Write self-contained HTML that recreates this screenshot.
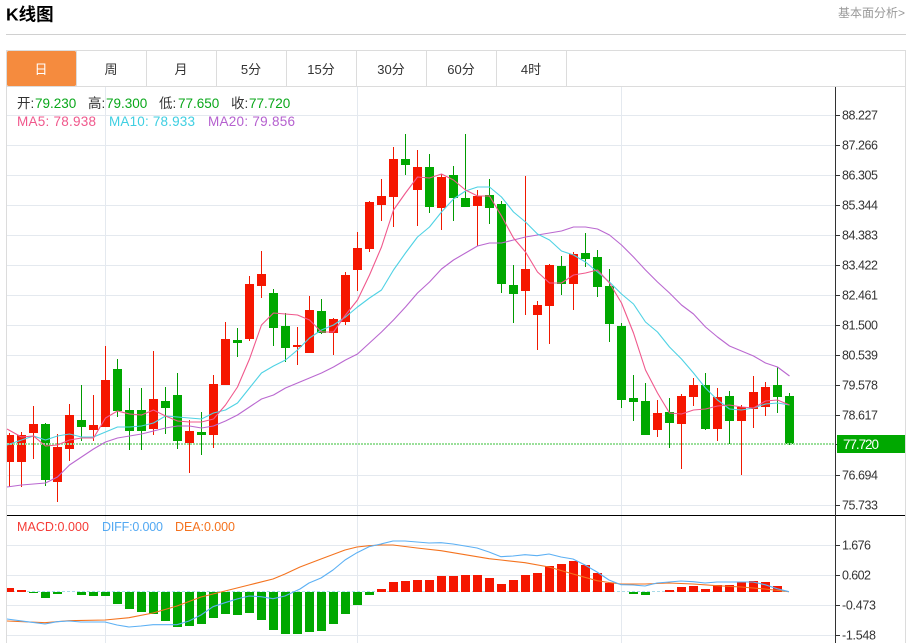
<!DOCTYPE html>
<html><head><meta charset="utf-8"><title>K线图</title>
<style>
html,body{margin:0;padding:0;background:#fff;width:914px;height:643px;overflow:hidden}
svg{display:block;font-family:"Liberation Sans","Noto Sans CJK SC",sans-serif}
</style></head><body>
<svg width="914" height="643" viewBox="0 0 914 643" xmlns="http://www.w3.org/2000/svg">
<text x="6" y="20.5" font-size="17.5" font-weight="700" fill="#000">K线图</text>
<text x="838" y="17" font-size="12" fill="#999" textLength="67">基本面分析&gt;</text>
<path d="M6 34.5H906" stroke="#d0d0d0" fill="none"/>
<path d="M6.5 643V50.5H905.5V643M7 86.5H905M146.5 51V86M216.5 51V86M286.5 51V86M356.5 51V86M426.5 51V86M496.5 51V86M566.5 51V86M76.5 51V86" stroke="#dcdcdc" fill="none"/>
<rect x="7" y="51" width="69" height="35" rx="1.5" fill="#f58b3e"/>
<g font-size="13" text-anchor="middle" fill="#333">
<text x="41" y="74" fill="#fff">日</text><text x="111" y="74">周</text><text x="181" y="74">月</text><text x="251" y="74">5分</text><text x="321" y="74">15分</text><text x="391" y="74">30分</text><text x="461" y="74">60分</text><text x="531" y="74">4时</text>
</g>
<path d="M7 115.5H835M7 145.5H835M7 175.5H835M7 205.5H835M7 235.5H835M7 265.5H835M7 295.5H835M7 325.5H835M7 355.5H835M7 385.5H835M7 415.5H835M7 475.5H835M7 505.5H835M7 545.5H835M7 575.5H835M7 605.5H835M7 635.5H835M105.5 87V643M357.5 87V643M621.5 87V643" stroke="#e4e9ef" fill="none"/>

<path d="M9.5 433V487M21.5 432V487M33.5 406V459M57.5 434V502M69.5 404V461M93.5 395V441M105.5 346V427M153.5 351V435M189.5 420V473M213.5 375V448M225.5 322V385M249.5 276V341M261.5 251V298M297.5 327V365M309.5 296V353M333.5 318V355M345.5 272V325M357.5 232V291M369.5 201V252M381.5 179V221M393.5 147V227M417.5 150V226M441.5 174V230M477.5 190V246M525.5 176V315M537.5 301V350M549.5 264V344M573.5 252V310M657.5 400V437M681.5 394V469M693.5 378V406M717.5 388V441M741.5 405V475M753.5 376V428M765.5 382V416" stroke="#f01800" fill="none"/>
<path d="M7 435h7v27h-7zM17 435h9v27h-9zM29 424h9v9h-9zM53 447h9v35h-9zM65 415h9v34h-9zM89 425h9v5h-9zM101 380h9v47h-9zM149 399h9v30h-9zM185 431h9v12h-9zM209 384h9v51h-9zM221 339h9v46h-9zM245 284h9v55h-9zM257 274h9v12h-9zM293 345h9v2h-9zM305 310h9v43h-9zM329 319h9v14h-9zM341 275h9v47h-9zM353 248h9v22h-9zM365 202h9v47h-9zM377 196h9v9h-9zM389 159h9v38h-9zM413 167h9v23h-9zM437 177h9v31h-9zM473 196h9v10h-9zM521 269h9v22h-9zM533 305h9v10h-9zM545 265h9v41h-9zM569 254h9v30h-9zM653 413h9v17h-9zM677 396h9v28h-9zM689 385h9v12h-9zM713 397h9v32h-9zM737 407h9v14h-9zM749 392h9v17h-9zM761 387h9v20h-9z" fill="#f51600"/>
<path d="M45.5 423V486M81.5 385V441M117.5 359V417M129.5 388V450M141.5 388V450M165.5 387V434M177.5 373V449M201.5 412V455M237.5 328V357M273.5 289V346M285.5 313V362M321.5 299V334M405.5 134V175M429.5 154V213M453.5 166V221M465.5 134V207M489.5 179V224M501.5 201V293M513.5 265V323M561.5 256V295M585.5 233V267M597.5 250V297M609.5 269V342M621.5 323V408M633.5 375V421M645.5 383V435M669.5 398V448M705.5 373V430M729.5 391V444M777.5 367V413M789.5 393V445" stroke="#009a00" fill="none"/>
<path d="M41 424h9v56h-9zM77 420h9v7h-9zM113 369h9v42h-9zM125 410h9v21h-9zM137 410h9v21h-9zM161 401h9v7h-9zM173 395h9v46h-9zM197 432h9v3h-9zM233 340h9v3h-9zM269 293h9v35h-9zM281 326h9v22h-9zM317 311h9v22h-9zM401 159h9v6h-9zM425 167h9v40h-9zM449 175h9v23h-9zM461 198h9v9h-9zM485 195h9v13h-9zM497 204h9v80h-9zM509 285h9v9h-9zM557 266h9v18h-9zM581 253h9v6h-9zM593 257h9v30h-9zM605 286h9v38h-9zM617 326h9v74h-9zM629 398h9v4h-9zM641 401h9v34h-9zM665 412h9v11h-9zM701 385h9v44h-9zM725 396h9v25h-9zM773 385h9v12h-9zM785 396h9v48h-9z" fill="#00a800"/>

<path d="M7 444H835" stroke="#9adf9a" stroke-width="2" stroke-dasharray="2 1" fill="none"/>

<g stroke-linejoin="round">
<polyline fill="none" stroke="#ba68d0" stroke-width="1.1" points="7,487 21.5,485 33.5,484 45.5,483 57.5,477 69.5,465 81.5,457 93.5,449 105.5,442 117.5,438 129.5,436 141.5,434 153.5,431 165.5,428 177.5,426 189.5,426 201.5,428 213.5,426 225.5,421 237.5,415 249.5,407 261.5,399 273.5,395 285.5,388 297.5,383 309.5,378 321.5,373 333.5,367 345.5,360 357.5,354 369.5,343 381.5,332 393.5,320 405.5,307 417.5,293 429.5,282 441.5,269 453.5,260 465.5,253 477.5,246 489.5,243 501.5,243 513.5,240 525.5,237 537.5,235 549.5,233 561.5,231 573.5,227 585.5,227 597.5,229 609.5,235 621.5,245 633.5,257 645.5,270 657.5,282 669.5,293 681.5,305 693.5,314 705.5,327 717.5,337 729.5,346 741.5,351 753.5,356 765.5,363 777.5,367 789.5,376"/>
<polyline fill="none" stroke="#4fd2e4" stroke-width="1.1" points="7,445 21.5,440 33.5,436 45.5,440 57.5,436 69.5,434 81.5,437 93.5,437 105.5,432 117.5,427 129.5,427 141.5,426 153.5,423 165.5,416 177.5,417 189.5,418 201.5,419 213.5,413 225.5,410 237.5,403 249.5,388 261.5,373 273.5,366 285.5,360 297.5,350 309.5,338 321.5,330 333.5,325 345.5,317 357.5,307 369.5,298 381.5,290 393.5,270 405.5,253 417.5,237 429.5,227 441.5,212 453.5,199 465.5,191 477.5,187 489.5,187 501.5,197 513.5,212 525.5,222 537.5,234 549.5,240 561.5,251 573.5,255 585.5,262 597.5,272 609.5,282 621.5,294 633.5,304 645.5,322 657.5,332 669.5,347 681.5,359 693.5,373 705.5,388 717.5,400 729.5,409 741.5,410 753.5,408 765.5,404 777.5,403 789.5,405"/>
<polyline fill="none" stroke="#f0588c" stroke-width="1.1" points="7,429 21.5,437 33.5,436 45.5,446 57.5,445 69.5,440 81.5,438 93.5,438 105.5,418 117.5,411 129.5,414 141.5,415 153.5,410 165.5,416 177.5,421 189.5,422 201.5,422 213.5,419 225.5,405 237.5,387 249.5,359 261.5,325 273.5,313 285.5,314 297.5,315 309.5,320 321.5,332 333.5,332 345.5,315 357.5,300 369.5,275 381.5,247 393.5,210 405.5,193 417.5,177 429.5,178 441.5,174 453.5,180 465.5,190 477.5,196 489.5,196 501.5,216 513.5,238 525.5,252 537.5,272 549.5,283 561.5,283 573.5,275 585.5,273 597.5,270 609.5,283 621.5,303 633.5,333 645.5,370 657.5,393 669.5,413 681.5,414 693.5,410 705.5,409 717.5,406 729.5,405 741.5,407 753.5,408 765.5,401 777.5,400 789.5,405"/>
</g>

<path d="M7 591.5H789" stroke="#a9dbe8" stroke-dasharray="3 2" fill="none"/>
<path d="M7 588h7v4h-7zM17 590h9v2h-9zM377 589h9v3h-9zM389 582h9v10h-9zM401 581h9v11h-9zM413 580h9v12h-9zM425 580h9v12h-9zM437 576h9v16h-9zM449 576h9v16h-9zM461 575h9v17h-9zM473 575h9v17h-9zM485 578h9v14h-9zM497 584h9v8h-9zM509 580h9v12h-9zM521 575h9v17h-9zM533 573h9v19h-9zM545 566h9v26h-9zM557 564h9v28h-9zM569 561h9v31h-9zM581 565h9v27h-9zM593 573h9v19h-9zM605 583h9v9h-9zM665 590h9v2h-9zM677 587h9v5h-9zM689 586h9v6h-9zM701 589h9v3h-9zM713 585h9v7h-9zM725 585h9v7h-9zM737 582h9v10h-9zM749 581h9v11h-9zM761 582h9v10h-9zM773 586h9v6h-9z" fill="#f51600"/>
<path d="M29 592h9v1h-9zM41 592h9v6h-9zM53 592h9v2h-9zM77 592h9v3h-9zM89 592h9v4h-9zM101 592h9v4h-9zM113 592h9v12h-9zM125 592h9v17h-9zM137 592h9v20h-9zM149 592h9v22h-9zM161 592h9v29h-9zM173 592h9v35h-9zM185 592h9v34h-9zM197 592h9v32h-9zM209 592h9v26h-9zM221 592h9v22h-9zM233 592h9v23h-9zM245 592h9v21h-9zM257 592h9v28h-9zM269 592h9v38h-9zM281 592h9v42h-9zM293 592h9v42h-9zM305 592h9v40h-9zM317 592h9v39h-9zM329 592h9v32h-9zM341 592h9v22h-9zM353 592h9v13h-9zM365 592h9v3h-9zM629 592h9v2h-9zM641 592h9v3h-9z" fill="#00a800"/>
<polyline fill="none" stroke="#f4731f" stroke-width="1.1" stroke-linejoin="round" points="7,621 45,622.7 69,620.7 105,620 129,617.7 153,613 177,606 201,597 225,591 249,585 273,579 285,574 300,567 321,559 345,550 357,547 369,545.7 381,545 393,545 417,548 441,550.7 465,554.7 489,558.7 501,560 525,562.7 549,567 573,574 597,580.7 609,582.5 621,584 645,584 669,583 693,584 717,585.7 741,587 765,589 789,591.7"/>
<polyline fill="none" stroke="#5cb0f4" stroke-width="1.1" stroke-linejoin="round" points="7,619 27,621.7 45,624 57,621.7 69,621 81,622 105,622 117,625 129,627 141,626 153,624.7 177,624.7 189,621 201,615 213,606.7 225,602.7 237,599 249,596 261,596.7 273,598.7 285,596 300,589 309,583 321,578 333,570 345,560 357,552.7 369,546.7 381,544 393,541 405,541 417,542 429,543 441,542.7 453,544 465,546 477,548 489,552 501,556.7 513,556 525,554.7 537,555.7 549,554 561,557 573,559 585,565 597,572 609,580 621,584.7 633,585 645,586 657,583 669,582 681,581 693,581.7 705,583 717,582 729,582 741,582 753,582 765,584.7 777,588.7 789,591.7"/>

<path d="M7 515.5H905" stroke="#000" fill="none"/>
<path d="M835.5 87V643M835 115.5h5M835 145.5h5M835 175.5h5M835 205.5h5M835 235.5h5M835 265.5h5M835 295.5h5M835 325.5h5M835 355.5h5M835 385.5h5M835 415.5h5M835 444.5h5M835 475.5h5M835 505.5h5M835 545.5h5M835 575.5h5M835 605.5h5M835 635.5h5" stroke="#333" fill="none"/>
<rect x="837" y="435" width="68" height="18" fill="#00a800"/>
<text x="843" y="449" font-size="13.5" fill="#fff" textLength="36">77.720</text>
<g font-size="12.5" fill="#333">
<text x="842" y="119.5" textLength="36">88.227</text><text x="842" y="149.5" textLength="36">87.266</text><text x="842" y="179.5" textLength="36">86.305</text><text x="842" y="209.5" textLength="36">85.344</text><text x="842" y="239.5" textLength="36">84.383</text><text x="842" y="269.5" textLength="36">83.422</text><text x="842" y="299.5" textLength="36">82.461</text><text x="842" y="329.5" textLength="36">81.500</text><text x="842" y="359.5" textLength="36">80.539</text><text x="842" y="389.5" textLength="36">79.578</text><text x="842" y="419.5" textLength="36">78.617</text><text x="842" y="479.5" textLength="36">76.694</text><text x="842" y="509.5" textLength="36">75.733</text>
<text x="842" y="549.5" textLength="29">1.676</text><text x="842" y="579.5" textLength="29">0.602</text><text x="842" y="609.5" textLength="34">-0.473</text><text x="842" y="639.5" textLength="34">-1.548</text>
</g>
<g font-size="13.5" fill="#333">
<text x="17" y="108">开:</text><text x="88" y="108">高:</text><text x="159" y="108">低:</text><text x="231" y="108">收:</text>
</g>
<g font-size="13.5" fill="#09a71a">
<text x="35" y="108">79.230</text><text x="106" y="108">79.300</text><text x="178" y="108">77.650</text><text x="249" y="108">77.720</text>
</g>
<text x="17" y="126" font-size="13.5" fill="#f0588c" textLength="79">MA5: 78.938</text>
<text x="109" y="126" font-size="13.5" fill="#3fcfe2" textLength="86">MA10: 78.933</text>
<text x="208" y="126" font-size="13.5" fill="#b560cf" textLength="87">MA20: 79.856</text>
<text x="17" y="531" font-size="12.5" fill="#f53b36" textLength="72">MACD:0.000</text>
<text x="102" y="531" font-size="12.5" fill="#52a8f2" textLength="61">DIFF:0.000</text>
<text x="175" y="531" font-size="12.5" fill="#f4721e" textLength="60">DEA:0.000</text>
</svg>
</body></html>
